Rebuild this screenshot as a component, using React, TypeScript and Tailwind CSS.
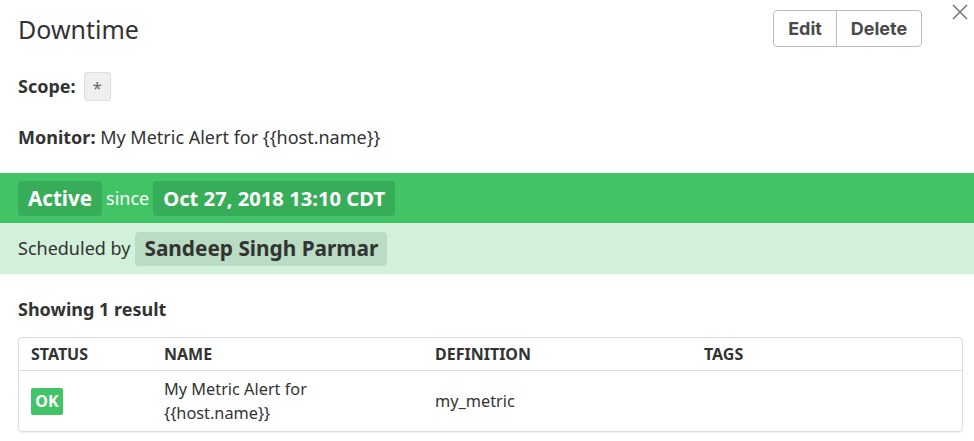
import React from 'react';

const App: React.FC = () => {
  return (
    <div className="w-[974px] h-[441px] bg-white overflow-hidden relative text-[#333] font-['Noto_Sans',sans-serif]">
      {/* close */}
      <button className="absolute right-[5px] top-[3px] w-[18px] h-[18px] text-[#777]">
        <svg width="18" height="18" viewBox="0 0 18 18" fill="none" stroke="currentColor" strokeWidth="1.6">
          <path d="M2 2 L16 16 M16 2 L2 16" />
        </svg>
      </button>

      {/* HEADER */}
      <div className="flex items-start justify-between pl-[18px] pr-[52px] pt-[10px]">
        <h1 className="text-[25px] leading-[36px] text-[#333] pt-[1px]">Downtime</h1>
        <div className="flex border border-[#bdbdbd] rounded-[4px] h-[37px] font-['Inter',sans-serif] text-[18px] font-bold text-[#4a4a4a]">
          <button className="w-[63px] border-r border-[#bdbdbd]">Edit</button>
          <button className="w-[84px]">Delete</button>
        </div>
      </div>

      <div className="flex items-center px-[18px] mt-[25px] text-[18px]">
        <span className="font-bold">Scope:</span>
        <span className="ml-[8px] w-[27px] h-[29px] flex items-center justify-center bg-[#efefef] border border-[#dedede] rounded-[3px] text-[#666] text-[17px] pt-[2px]">*</span>
      </div>

      <div className="px-[18px] mt-[22px] text-[18px] leading-[28px]">
        <span className="font-bold">Monitor:</span> My Metric Alert for {'{{host.name}}'}
      </div>

      {/* STATUS BARS */}
      <div className="mt-[22px]">
        <div className="h-[50px] bg-[#41c465] flex items-center px-[18px] text-white">
          <span className="h-[35px] px-[10px] flex items-center bg-[#38ad59] rounded-[4px] text-[20.6px] font-bold">Active</span>
          <span className="ml-[4px] mr-[4px] text-[18px]">since</span>
          <span className="h-[35px] px-[10px] flex items-center bg-[#38ad59] rounded-[4px] text-[20.2px] font-bold">Oct 27, 2018 13:10 CDT</span>
        </div>
        <div className="h-[51px] bg-[#d3f0da] flex items-center px-[18px]">
          <span className="text-[18px] text-[#333]">Scheduled by</span>
          <span className="ml-[5px] h-[34px] px-[9px] flex items-center bg-[#b9dcc2] rounded-[4px] text-[20.8px] font-bold text-[#333]">Sandeep Singh Parmar</span>
        </div>
      </div>

      {/* RESULTS */}
      <div className="px-[18px] mt-[22px]">
        <div className="text-[18px] font-bold leading-[26px]">Showing 1 result</div>
        <div className="mt-[15px] w-[945px] border border-[#dcdcdc] rounded-[4px] shadow-[0_1px_1px_rgba(0,0,0,0.06)]">
          <div className="grid grid-cols-[133px_271px_269px_1fr] h-[33px] items-center border-b border-[#dcdcdc] text-[16px] font-bold text-[#333] pl-[12px]">
            <span>STATUS</span>
            <span>NAME</span>
            <span>DEFINITION</span>
            <span>TAGS</span>
          </div>
          <div className="grid grid-cols-[133px_271px_269px_1fr] h-[60px] items-center text-[16.3px] text-[#333] pl-[12px]">
            <span className="w-[32px] h-[27px] flex items-center justify-center bg-[#41c465] rounded-[2px] text-white font-bold text-[16px]">OK</span>
            <span className="leading-[24px]">My Metric Alert for<br />{'{{host.name}}'}</span>
            <span>my_metric</span>
            <span></span>
          </div>
        </div>
      </div>
    </div>
  );
};

export default App;
